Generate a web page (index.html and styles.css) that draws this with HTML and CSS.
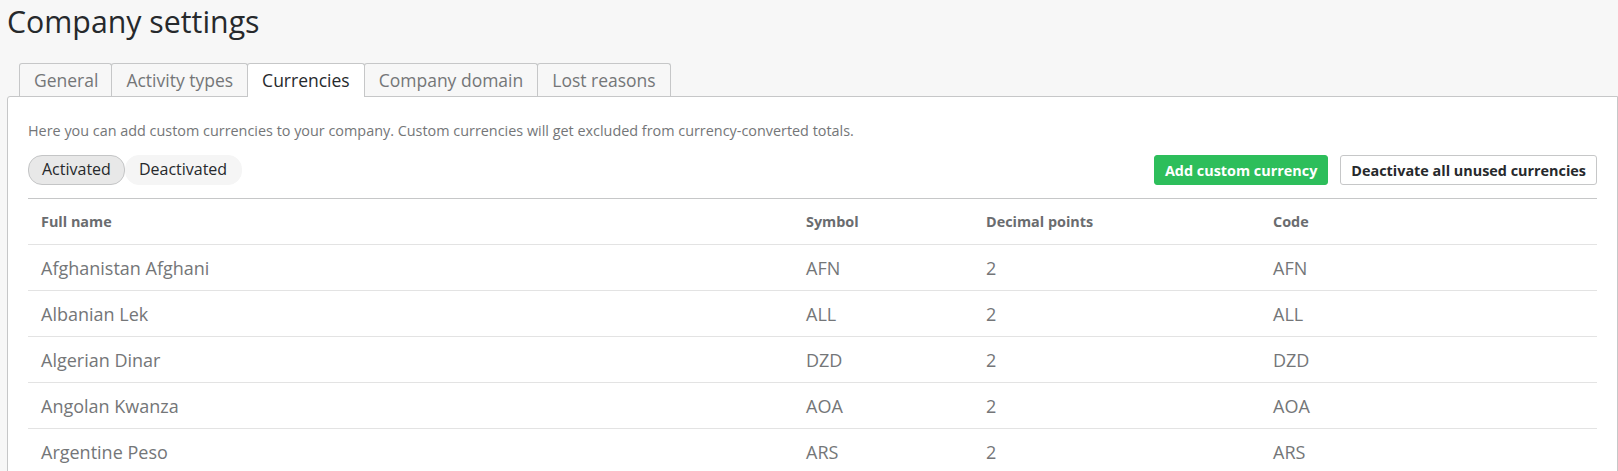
FILE: index.html
```html
<!DOCTYPE html>
<html lang="en">
<head>
<meta charset="utf-8">
<title>Company settings</title>
<link rel="stylesheet" href="styles.css">
</head>
<body>
<div class="page">
  <h1 class="title">Company settings</h1>
  <nav class="tabs">
    <a class="tab">General</a>
    <a class="tab">Activity types</a>
    <a class="tab tab-active">Currencies</a>
    <a class="tab">Company domain</a>
    <a class="tab">Lost reasons</a>
  </nav>
  <section class="panel">
    <p class="desc">Here you can add custom currencies to your company. Custom currencies will get excluded from currency-converted totals.</p>
    <div class="toolbar">
      <div class="pills">
        <span class="pill pill-active">Activated</span>
        <span class="pill">Deactivated</span>
      </div>
      <div class="actions">
        <button class="btn btn-green">Add custom currency</button>
        <button class="btn btn-white">Deactivate all unused currencies</button>
      </div>
    </div>
    <table class="grid">
      <colgroup>
        <col class="c-name"><col class="c-symbol"><col class="c-dec"><col class="c-code">
      </colgroup>
      <thead>
        <tr><th>Full name</th><th>Symbol</th><th>Decimal points</th><th>Code</th></tr>
      </thead>
      <tbody>
        <tr><td>Afghanistan Afghani</td><td>AFN</td><td>2</td><td>AFN</td></tr>
        <tr><td>Albanian Lek</td><td>ALL</td><td>2</td><td>ALL</td></tr>
        <tr><td>Algerian Dinar</td><td>DZD</td><td>2</td><td>DZD</td></tr>
        <tr><td>Angolan Kwanza</td><td>AOA</td><td>2</td><td>AOA</td></tr>
        <tr><td>Argentine Peso</td><td>ARS</td><td>2</td><td>ARS</td></tr>
      </tbody>
    </table>
  </section>
</div>
</body>
</html>
```
FILE: styles.css
```css
html, body {
  margin: 0;
  padding: 0;
  background: #f7f7f7;
  font-family: "Open Sans", "DejaVu Sans", sans-serif;
  overflow: hidden;
}

.page {
  padding: 1px 0 0 7px;
}

.title {
  margin: 0 0 21px 0;
  font-size: 30.3px;
  font-weight: 400;
  line-height: 41px;
  color: #26292c;
}

.tabs {
  display: flex;
  padding-left: 12px;
  margin-bottom: -1px;
  position: relative;
  z-index: 1;
}

.tab {
  display: block;
  height: 32px;
  line-height: 32px;
  padding: 0 14px;
  font-size: 17.5px;
  color: #747678;
  background: #f7f7f7;
  border: 1px solid #c6c7c8;
  border-bottom: none;
  border-radius: 3px 3px 0 0;
  margin-right: -1px;
}

.tab:first-child {
  padding: 0 13px 0 14px;
}

.tab-active {
  height: 33px;
  background: #fff;
  color: #26292c;
}

.panel {
  background: #fff;
  border: 1px solid #c6c7c8;
  border-radius: 3px 0 0 0;
  padding: 0 20px 20px 20px;
  height: 420px;
}

.desc {
  margin: 0;
  padding-top: 24px;
  font-size: 14.4px;
  line-height: 20px;
  color: #747678;
}

.toolbar {
  display: flex;
  justify-content: space-between;
  align-items: flex-start;
  margin-top: 14px;
}

.pills {
  display: flex;
}

.pill {
  display: block;
  height: 28px;
  line-height: 26px;
  padding: 0 13px;
  font-size: 16px;
  color: #26292c;
  background: #f5f5f5;
  border: 1px solid #f5f5f5;
  border-radius: 14px;
}

.pill-active {
  background: #e8e8e8;
  border-color: #c4c5c6;
}

.pill + .pill {
  padding: 0 14px 0 13px;
}

.actions {
  display: flex;
  gap: 12px;
}

.btn {
  height: 30px;
  padding: 0 10px;
  font-family: "Open Sans", sans-serif;
  font-size: 14.4px;
  font-weight: 700;
  border-radius: 3px;
  cursor: pointer;
}

.btn-green {
  background: #2dbe5b;
  border: 1px solid #2dbe5b;
  color: #fff;
}

.btn-white {
  background: #fff;
  border: 1px solid #c6c7c8;
  color: #26292c;
}

.grid {
  width: 100%;
  margin-top: 13px;
  border-collapse: collapse;
  table-layout: fixed;
  border-top: 1px solid #c6c7c8;
}

.c-name { width: 765px; }
.c-symbol { width: 180px; }
.c-dec { width: 287px; }

.grid th,
.grid td {
  text-align: left;
  padding: 0 13px;
  border-bottom: 1px solid #e3e3e3;
}

.grid th {
  height: 45px;
  font-size: 14.4px;
  font-weight: 700;
  color: #6a6c6f;
}

.grid td {
  height: 45px;
  font-size: 18px;
  color: #747678;
}
```
